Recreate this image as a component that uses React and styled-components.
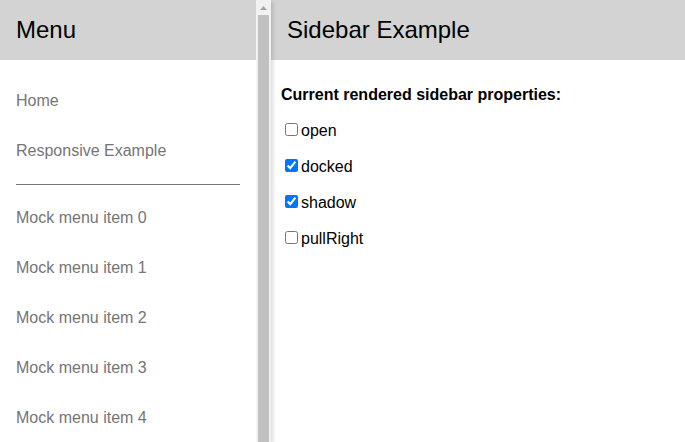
import React, { useState } from 'react'
import styled, { createGlobalStyle } from 'styled-components'

const GlobalStyle = createGlobalStyle`
html, body {
  margin: 0;
  height: 100%;
  overflow: hidden;
  font-family: "Liberation Sans", Arial, sans-serif;
}
#root {
  height: 100%;
}
`

const Root = styled.div`
display: flex;
height: 100vh;
`

const Sidebar = styled.div`
flex: 0 0 auto;
display: flex;
height: 100%;
background: white;
box-shadow: rgba(0, 0, 0, 0.15) 2px 2px 4px;
position: relative;
z-index: 2;
`

const Panel = styled.div`
width: 256px;
height: 100%;
overflow: hidden;
`

// stand-in for the native scrollbar (headless hides real ones)
const Track = styled.div`
width: 15px;
height: 100%;
background: #f1f1f1;
display: flex;
flex-direction: column;
align-items: center;
`

const Arrow = styled.div`
height: 15px;
width: 15px;
display: flex;
align-items: center;
justify-content: center;
flex: 0 0 auto;
`

const Thumb = styled.div`
width: 11px;
flex: 1;
background: #c1c1c1;
`

const Main = styled.div`
flex: 1;
display: flex;
flex-direction: column;
min-width: 0;
`

const Header = styled.div`
background-color: lightgray;
color: black;
padding: 16px;
font-size: 24px;
`

const MenuContent = styled.div`
padding: 16px;
background-color: white;
`

const MenuLink = styled.a`
display: block;
padding: 16px 0;
color: #757575;
text-decoration: none;
font-size: 16px;
`

const Divider = styled.div`
margin: 8px 0;
height: 1px;
background-color: #757575;
`

const Content = styled.div`
padding: 10px;
`

const Para = styled.p`
margin: 16px 0;
font-size: 16px;
`

const Check = styled.input`
margin: 3px 3px 3px 4px;
`

const Props = () => {
  const [props, setProps] = useState({ open: false, docked: true, shadow: true, pullRight: false })
  const toggle = (k) => setProps({ ...props, [k]: !props[k] })
  return (
    <>
      {Object.keys(props).map((k) => (
        <Para key={k}>
          <label>
            <Check type="checkbox" checked={props[k]} onChange={() => toggle(k)} />
            {k}
          </label>
        </Para>
      ))}
    </>
  )
}

const App = () => {
  const items = [0, 1, 2, 3, 4]
  return (
    <Root>
      <GlobalStyle />
      <Sidebar>
        <Panel>
          <Header>Menu</Header>
          <MenuContent>
            <MenuLink href="#">Home</MenuLink>
            <MenuLink href="#">Responsive Example</MenuLink>
            <Divider />
            {items.map((i) => (
              <MenuLink key={i} href="#">Mock menu item {i}</MenuLink>
            ))}
          </MenuContent>
        </Panel>
        <Track>
          <Arrow>
            <svg width="7" height="4" viewBox="0 0 7 4">
              <path d="M3.5 0 L7 4 L0 4 Z" fill="#a3a3a3" />
            </svg>
          </Arrow>
          <Thumb />
        </Track>
      </Sidebar>
      <Main>
        <Header>Sidebar Example</Header>
        <Content>
          <Para><b>Current rendered sidebar properties:</b></Para>
          <Props />
        </Content>
      </Main>
    </Root>
  )
}

export default App
